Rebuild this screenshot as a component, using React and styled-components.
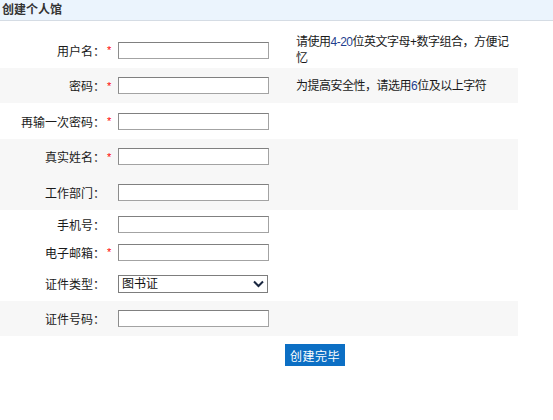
import React from 'react';
import styled, { createGlobalStyle } from 'styled-components';

const GlobalStyle = createGlobalStyle`
  body {
    margin: 0;
    background: #fff;
    font-family: "Liberation Sans", "Noto Sans CJK SC", sans-serif;
    font-size: 12px;
    color: #222;
  }
`;

const Page = styled.div`
  width: 553px;
`;

const Header = styled.div`
  height: 20px;
  line-height: 20px;
  padding-left: 2px;
  background: #ebf4fd;
  border-bottom: 1px solid #d5dce4;
  font-weight: bold;
  font-size: 12px;
  color: #333;
`;

const Form = styled.div`
  width: 518px;
  margin-top: 11px;
`;

const Row = styled.div`
  display: grid;
  grid-template-columns: 116px 180px 1fr;
  align-items: center;
  height: ${(p) => p.$h}px;
  background: ${(p) => (p.$grey ? '#f7f7f7' : '#fff')};
`;

const Label = styled.div`
  display: flex;
  justify-content: flex-end;
  align-items: center;
  padding-right: 3px;
  color: #1a1a1a;
`;

const Star = styled.span`
  width: 6px;
  padding-left: 2px;
  color: #f00;
  font-size: 11px;
  visibility: ${(p) => (p.$show ? 'visible' : 'hidden')};
`;

const Field = styled.div`
  padding-left: 2px;
  display: flex;
  align-items: center;
`;

const Input = styled.input`
  box-sizing: border-box;
  width: 151px;
  height: 17px;
  margin: 0;
  padding: 0 2px;
  border: 1px solid #a3a3a3;
  border-top-color: #808080;
  border-left-color: #8c8c8c;
  background: #fff;
  font: inherit;
  outline: none;
`;

const SelectBox = styled.div`
  position: relative;
  width: 150px;
  height: 18px;
`;

const Select = styled.select`
  box-sizing: border-box;
  appearance: none;
  width: 100%;
  height: 100%;
  margin: 0;
  padding: 0 0 0 3px;
  border: 1px solid #7d7d7d;
  background: #fff;
  font: inherit;
  font-size: 12px;
  color: #111;
  outline: none;
`;

const Chevron = styled.svg`
  position: absolute;
  right: 4px;
  top: 5px;
  pointer-events: none;
`;

const Hint = styled.div`
  width: 222px;
  line-height: 16px;
  letter-spacing: -0.5px;
  color: #1a1a1a;
`;

const Num = styled.span`
  color: #1f3f8f;
`;

const Footer = styled.div`
  padding: 8px 0 0 285px;
`;

const Button = styled.button`
  width: 60px;
  height: 22px;
  padding: 0;
  border: none;
  background: #0c6fc4;
  color: #fff;
  font: inherit;
  font-size: 12px;
  letter-spacing: 0.5px;
  cursor: pointer;
`;

const rows = [
  { label: '用户名：', star: true, h: 36, hint: 'user' },
  { label: '密码：', star: true, h: 35, grey: true, hint: 'pwd', type: 'password' },
  { label: '再输一次密码：', star: true, h: 36, type: 'password' },
  { label: '真实姓名：', star: true, h: 35, grey: true },
  { label: '工作部门：', h: 36, grey: true },
  { label: '手机号：', h: 28 },
  { label: '电子邮箱：', star: true, h: 28 },
  { label: '证件类型：', h: 35, select: true },
  { label: '证件号码：', h: 35, grey: true },
];

const hints = {
  user: (
    <>
      请使用<Num>4-20</Num>位英文字母+数字组合，方便记忆
    </>
  ),
  pwd: (
    <>
      为提高安全性，请选用<Num>6</Num>位及以上字符
    </>
  ),
};

const App = () => {
  return (
    <Page>
      <GlobalStyle />
      <Header>创建个人馆</Header>
      <Form>
        {rows.map((row) => (
          <Row key={row.label} $h={row.h} $grey={row.grey}>
            <Label>
              {row.label}
              <Star $show={row.star}>*</Star>
            </Label>
            <Field>
              {row.select ? (
                <SelectBox>
                  <Select defaultValue="图书证">
                    <option>图书证</option>
                    <option>身份证</option>
                  </Select>
                  <Chevron width="11" height="8" viewBox="0 0 11 8">
                    <path d="M1 1.5 L5.5 6 L10 1.5" fill="none" stroke="#1a2740" strokeWidth="2" />
                  </Chevron>
                </SelectBox>
              ) : (
                <Input type={row.type || 'text'} />
              )}
            </Field>
            <Hint>{row.hint && hints[row.hint]}</Hint>
          </Row>
        ))}
        <Footer>
          <Button>创建完毕</Button>
        </Footer>
      </Form>
    </Page>
  );
};

export default App;
